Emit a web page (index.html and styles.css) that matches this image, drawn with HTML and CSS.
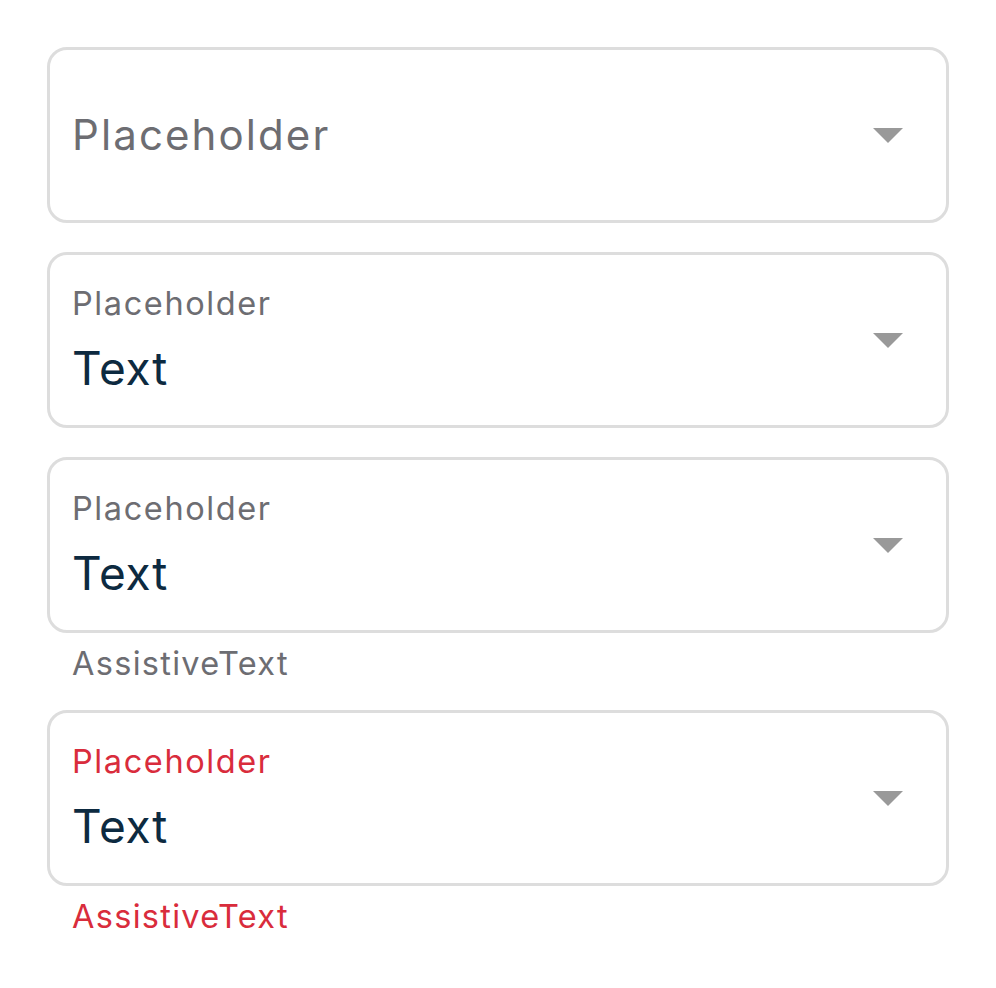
FILE: index.html
```html
<!DOCTYPE html>
<html>
<head>
<meta charset="utf-8">
<link rel="stylesheet" href="styles.css">
</head>
<body>
<div class="page">
  <div class="group">
    <div class="field">
      <div class="content">
        <div class="placeholder">Placeholder</div>
      </div>
      <svg class="arrow" width="30" height="15" viewBox="0 0 30 15"><polygon points="0,0 30,0 15,15" fill="#999999"/></svg>
    </div>
  </div>
  <div class="group">
    <div class="field">
      <div class="content">
        <div class="label">Placeholder</div>
        <div class="value">Text</div>
      </div>
      <svg class="arrow" width="30" height="15" viewBox="0 0 30 15"><polygon points="0,0 30,0 15,15" fill="#999999"/></svg>
    </div>
  </div>
  <div class="group">
    <div class="field">
      <div class="content">
        <div class="label">Placeholder</div>
        <div class="value">Text</div>
      </div>
      <svg class="arrow" width="30" height="15" viewBox="0 0 30 15"><polygon points="0,0 30,0 15,15" fill="#999999"/></svg>
    </div>
    <div class="assist">AssistiveText</div>
  </div>
  <div class="group">
    <div class="field">
      <div class="content">
        <div class="label is-error">Placeholder</div>
        <div class="value">Text</div>
      </div>
      <svg class="arrow" width="30" height="15" viewBox="0 0 30 15"><polygon points="0,0 30,0 15,15" fill="#999999"/></svg>
    </div>
    <div class="assist is-error">AssistiveText</div>
  </div>
</div>
</body>
</html>
```

FILE: styles.css
```css
html, body {
  margin: 0;
  padding: 0;
  background: #ffffff;
}
body {
  font-family: Inter, "Noto Sans", sans-serif;
}
.page {
  padding: 47px 47px 0 47px;
  display: flex;
  flex-direction: column;
  gap: 29px;
}
.group {
  display: flex;
  flex-direction: column;
}
.field {
  box-sizing: border-box;
  height: 176px;
  border: 3px solid #dddddd;
  border-radius: 20px;
  display: flex;
  align-items: center;
  padding: 0 43px 0 22px;
}
.content {
  flex: 1;
  display: flex;
  flex-direction: column;
}
.placeholder {
  font-size: 42px;
  line-height: 48px;
  letter-spacing: 2.1px;
  color: #6d6d72;
}
.label {
  font-size: 32.5px;
  line-height: 36px;
  letter-spacing: 1.6px;
  color: #6d6d72;
}
.value {
  font-size: 46px;
  line-height: 54px;
  letter-spacing: 0.8px;
  color: #0d2a40;
  margin-top: 19px;
}
.assist {
  font-size: 32.5px;
  line-height: 34px;
  letter-spacing: 1.3px;
  color: #6d6d72;
  padding: 14px 0 0 25px;
}
.label.is-error,
.assist.is-error {
  color: #d92c3c;
}
.arrow {
  display: block;
  flex: none;
}
```
